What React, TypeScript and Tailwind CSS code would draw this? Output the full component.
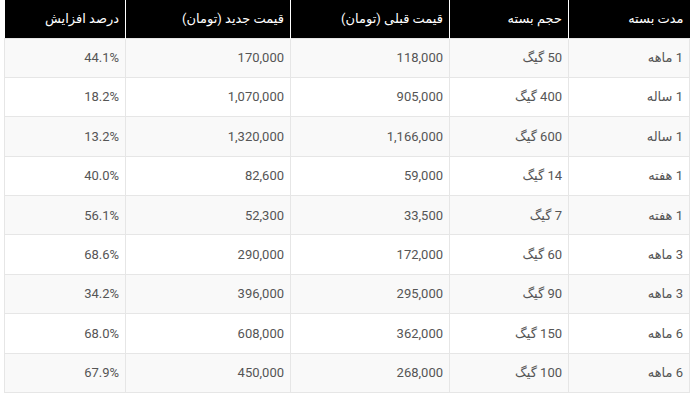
import React from 'react';

interface PackageRow {
  duration: string;
  volume: string;
  oldPrice: string;
  newPrice: string;
  increase: string;
}

const rows: PackageRow[] = [
  { duration: '1 ماهه', volume: '50 گیگ', oldPrice: '118,000', newPrice: '170,000', increase: '44.1%' },
  { duration: '1 ساله', volume: '400 گیگ', oldPrice: '905,000', newPrice: '1,070,000', increase: '18.2%' },
  { duration: '1 ساله', volume: '600 گیگ', oldPrice: '1,166,000', newPrice: '1,320,000', increase: '13.2%' },
  { duration: '1 هفته', volume: '14 گیگ', oldPrice: '59,000', newPrice: '82,600', increase: '40.0%' },
  { duration: '1 هفته', volume: '7 گیگ', oldPrice: '33,500', newPrice: '52,300', increase: '56.1%' },
  { duration: '3 ماهه', volume: '60 گیگ', oldPrice: '172,000', newPrice: '290,000', increase: '68.6%' },
  { duration: '3 ماهه', volume: '90 گیگ', oldPrice: '295,000', newPrice: '396,000', increase: '34.2%' },
  { duration: '6 ماهه', volume: '150 گیگ', oldPrice: '362,000', newPrice: '608,000', increase: '68.0%' },
  { duration: '6 ماهه', volume: '100 گیگ', oldPrice: '268,000', newPrice: '450,000', increase: '67.9%' },
];

const headers = ['مدت بسته', 'حجم بسته', 'قیمت قبلی (تومان)', 'قیمت جدید (تومان)', 'درصد افزایش'];

const App: React.FC = () => {
  return (
    <div className="w-[692px] h-[400px] bg-white pl-[4px] pr-[3px] font-['Roboto','DejaVu_Sans',sans-serif]">
      <table dir="rtl" className="w-[685px] table-fixed border-collapse text-[13px]">
        <colgroup>
          <col className="w-[121px]" />
          <col className="w-[119px]" />
          <col className="w-[159px]" />
          <col className="w-[165px]" />
          <col className="w-[121px]" />
        </colgroup>
        <thead>
          <tr className="h-[38px] bg-black">
            {headers.map((h) => (
              <th
                key={h}
                className="border-x border-white first:border-r-0 last:border-l-0 px-[6px] text-right font-normal text-white"
              >
                {h}
              </th>
            ))}
          </tr>
        </thead>
        <tbody>
          {rows.map((row, i) => (
            <tr key={i} className={`h-[39.4px] ${i % 2 === 0 ? 'bg-[#f9f9f9]' : 'bg-white'}`}>
              {[row.duration, row.volume, row.oldPrice, row.newPrice, row.increase].map((cell, j) => (
                <td key={j} className="border border-[#e6e6e6] px-[6px] text-right text-[#555555]">
                  {cell}
                </td>
              ))}
            </tr>
          ))}
        </tbody>
      </table>
    </div>
  );
};

export default App;
